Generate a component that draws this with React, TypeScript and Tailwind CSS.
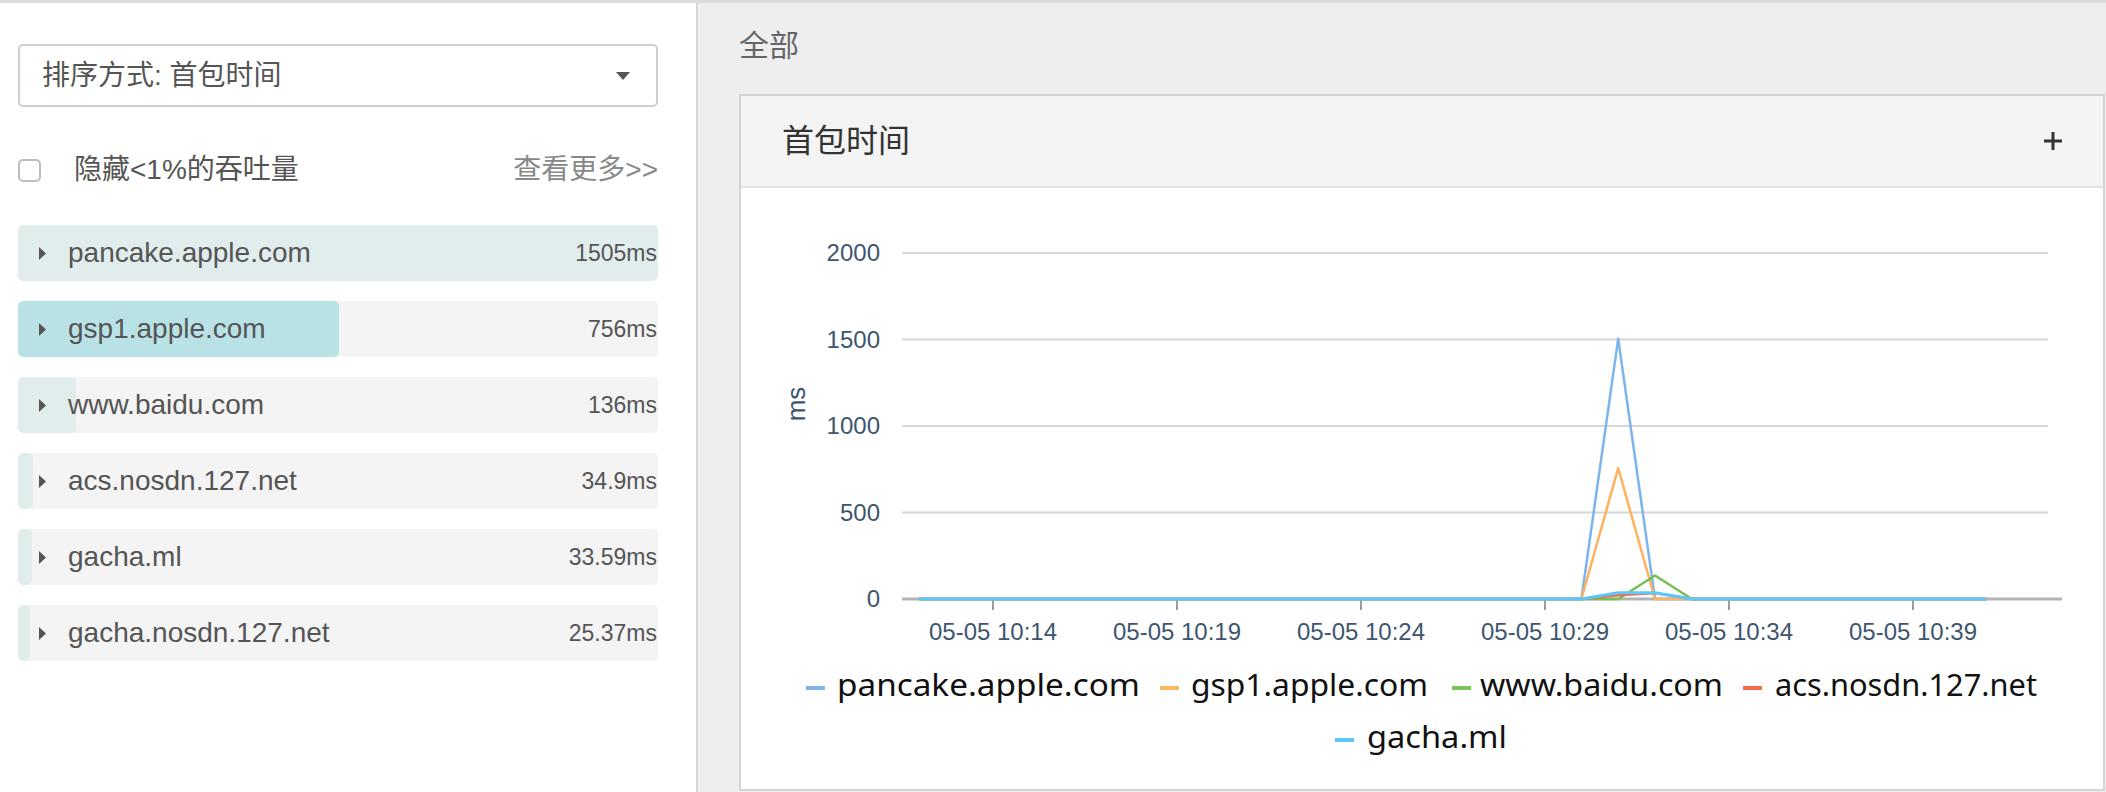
import React from "react";

const rows = [
  { name: "pancake.apple.com", value: 1505, label: "1505ms", active: false },
  { name: "gsp1.apple.com", value: 756, label: "756ms", active: true },
  { name: "www.baidu.com", value: 136, label: "136ms", active: false },
  { name: "acs.nosdn.127.net", value: 34.9, label: "34.9ms", active: false },
  { name: "gacha.ml", value: 33.59, label: "33.59ms", active: false },
  { name: "gacha.nosdn.127.net", value: 25.37, label: "25.37ms", active: false },
];

const N = 30;
const zeros = () => Array.from({ length: N }, () => 0);
const mk = (pts: Record<number, number>) => {
  const a = zeros();
  Object.entries(pts).forEach(([k, v]) => (a[Number(k)] = v));
  return a;
};

const series = [
  { name: "pancake.apple.com", color: "#7cb5ec", data: mk({ 19: 1505 }), w: 2.5 },
  { name: "gsp1.apple.com", color: "#ffb25e", data: mk({ 19: 756 }), w: 2.5 },
  { name: "www.baidu.com", color: "#74c050", data: mk({ 20: 136 }), w: 2.5 },
  { name: "acs.nosdn.127.net", color: "#f46a50", data: mk({ 19: 22, 20: 34.9 }), w: 2.5 },
  { name: "gacha.ml", color: "#5ac8fa", data: mk({ 19: 36, 20: 36 }), w: 3 },
];

const px = (i: number) => 178 + i * 36.8;
const py = (v: number) => 411 - v * 0.173;

const yTicks = [
  { v: 2000, y: 65 },
  { v: 1500, y: 151.5 },
  { v: 1000, y: 238 },
  { v: 500, y: 324.5 },
  { v: 0, y: 411 },
];
const xTicks = ["05-05 10:14", "05-05 10:19", "05-05 10:24", "05-05 10:29", "05-05 10:34", "05-05 10:39"];

const legend = [
  { name: "pancake.apple.com", color: "#7eb6ea", sx: 65, tx: 96, w: 303, row: 0 },
  { name: "gsp1.apple.com", color: "#ffb65e", sx: 419, tx: 450, w: 237, row: 0 },
  { name: "www.baidu.com", color: "#7dc35b", sx: 711, tx: 739, w: 243, row: 0 },
  { name: "acs.nosdn.127.net", color: "#f5694f", sx: 1002, tx: 1034, w: 262, row: 0 },
  { name: "gacha.ml", color: "#5ac8fa", sx: 594, tx: 626, w: 140, row: 1 },
];

function Chart() {
  const labelFont = { fontFamily: '"Liberation Sans", Arial, sans-serif' };
  return (
    <svg width="1362" height="601" viewBox="0 0 1362 601" className="block">
      {yTicks.map((t) =>
        t.v === 0 ? null : (
          <line key={t.v} x1={161} x2={1307} y1={t.y} y2={t.y} stroke="#d6d6d6" strokeWidth={2} />
        )
      )}
      <line x1={161} x2={1321} y1={411} y2={411} stroke="#b3b3b3" strokeWidth={3} />
      {xTicks.map((_, i) => (
        <line key={i} x1={252 + i * 184} x2={252 + i * 184} y1={411} y2={422} stroke="#9a9a9a" strokeWidth={2} />
      ))}
      {yTicks.map((t) => (
        <text key={t.v} x={139} y={t.y + 8} textAnchor="end" fontSize={24} fill="#3e5570" style={labelFont}>
          {t.v}
        </text>
      ))}
      {xTicks.map((l, i) => (
        <text key={l} x={252 + i * 184} y={452} textAnchor="middle" fontSize={24} fill="#3e5570" style={labelFont}>
          {l}
        </text>
      ))}
      <text
        x={0}
        y={0}
        transform="translate(64 216) rotate(-90)"
        textAnchor="middle"
        fontSize={26}
        fill="#3e5570"
        style={labelFont}
      >
        ms
      </text>
      {series.map((s) => (
        <polyline
          key={s.name}
          fill="none"
          stroke={s.color}
          strokeWidth={s.w}
          strokeLinejoin="round"
          points={s.data.map((v, i) => `${px(i)},${py(v)}`).join(" ")}
        />
      ))}
      {legend.map((l) => {
        const sy = l.row === 0 ? 500 : 552;
        return (
          <g key={l.name}>
            <line x1={l.sx} x2={l.sx + 19} y1={sy} y2={sy} stroke={l.color} strokeWidth={4} />
            <text
              x={l.tx}
              y={sy + 8}
              fontSize={30}
              fill="#111"
              textLength={l.w}
              lengthAdjust="spacingAndGlyphs"
              style={{ fontFamily: '"Noto Sans", "Liberation Sans", sans-serif' }}
            >
              {l.name}
            </text>
          </g>
        );
      })}
    </svg>
  );
}

export default function App() {
  const cjk = { fontFamily: '"Liberation Sans", "Noto Sans CJK SC", sans-serif' };
  return (
    <div className="w-[2106px] h-[792px] overflow-hidden border-t-[3px] border-[#dcdcdc] flex bg-white" style={cjk}>
      {/* Left panel */}
      <div className="w-[698px] h-full bg-white border-r-2 border-[#d6d6d6] flex flex-col pl-[18px]">
        <div className="w-[640px] h-[63px] mt-[41px] border-2 border-[#cfcfcf] rounded-[5px] flex items-center justify-between pl-[22px] pr-[26px]">
          <span className="text-[28px] text-[#555555] leading-none">排序方式: 首包时间</span>
          <svg width="14" height="8" viewBox="0 0 14 8">
            <path d="M0 0 L14 0 L7 8 Z" fill="#555555" />
          </svg>
        </div>
        <div className="w-[640px] h-[40px] mt-[43px] flex items-center justify-between">
          <div className="flex items-center">
            <div className="w-[23px] h-[23px] border-2 border-[#bdbdbd] rounded-[5px] bg-white" />
            <span className="ml-[33px] text-[28px] text-[#555555] leading-none">隐藏&lt;1%的吞吐量</span>
          </div>
          <span className="text-[28px] text-[#888888] leading-none">查看更多&gt;&gt;</span>
        </div>
        <div className="w-[640px] mt-[35px] flex flex-col gap-[20px]">
          {rows.map((r) => {
            const pct = Math.max((r.value / 1505) * 100, 1.9);
            return (
              <div key={r.name} className="relative h-[56px] rounded-[5px] bg-[#f4f4f4] overflow-hidden">
                <div
                  className={`absolute left-0 top-0 h-full rounded-[5px] ${r.active ? "bg-[#b9e2e6]" : "bg-[#e1eded]"}`}
                  style={{ width: `${pct}%` }}
                />
                <div className="relative h-full flex items-center justify-between pl-[21px] pr-[1px]">
                  <div className="flex items-center">
                    <svg width="7" height="13" viewBox="0 0 7 13">
                      <path d="M0 0 L7 6.5 L0 13 Z" fill="#555555" />
                    </svg>
                    <span className="ml-[22px] text-[28px] text-[#555555] leading-none">{r.name}</span>
                  </div>
                  <span className="text-[23px] text-[#555555] leading-none">{r.label}</span>
                </div>
              </div>
            );
          })}
        </div>
      </div>

      {/* Right panel */}
      <div className="flex-1 h-full bg-[#eeeeee] flex flex-col pl-[41px] pr-[1px]">
        <div className="h-[91px] pb-[6px] flex items-center">
          <span className="text-[30px] text-[#666666] leading-none">全部</span>
        </div>
        <div className="h-[697px] border-2 border-[#d3d3d3] bg-white flex flex-col">
          <div className="h-[92px] bg-[#f4f4f4] border-b-2 border-[#e3e3e3] flex items-center justify-between pl-[41px] pr-[41px]">
            <span className="text-[32px] text-[#333333] leading-none">首包时间</span>
            <svg width="18" height="18" viewBox="0 0 18 18">
              <path d="M9 0 V18 M0 9 H18" stroke="#333333" strokeWidth="3" />
            </svg>
          </div>
          <Chart />
        </div>
      </div>
    </div>
  );
}
